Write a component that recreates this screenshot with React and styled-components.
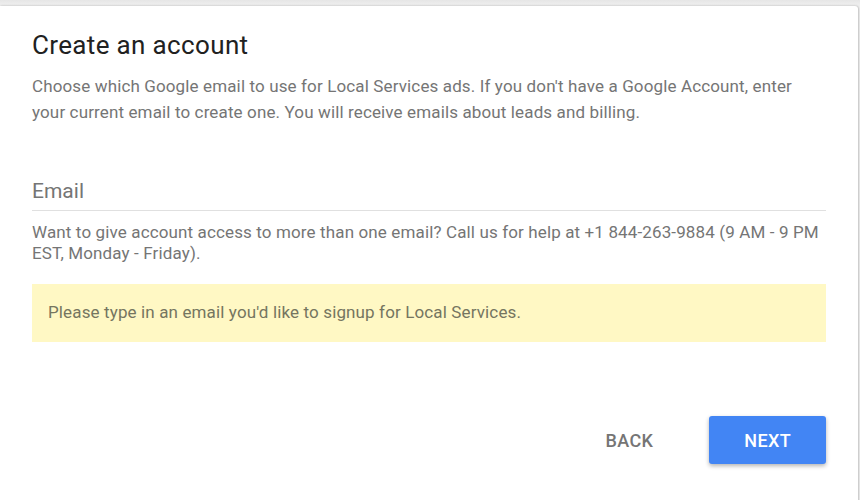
import styled, { createGlobalStyle } from 'styled-components'

const GlobalStyle = createGlobalStyle`
    html, body {
        margin: 0;
        padding: 0;
        background: #f2f2f2;
        font-family: Roboto, "Liberation Sans", Arial, sans-serif;
        overflow: hidden;
    }
`

const Page = styled.div`
    padding: 6px 2px 0 0;
    height: 494px;
    background: linear-gradient(#e6e6e6, #f0f0f0 6px);
`

const Card = styled.div`
    background: #fff;
    border-radius: 0 3px 0 0;
    box-shadow: 1px 0 2px rgba(0, 0, 0, 0.18), 0 -1px 2px rgba(0, 0, 0, 0.05);
    padding: 23px 32px 40px 32px;
    min-height: 100%;
    box-sizing: border-box;
`

const Title = styled.h1`
    margin: 0;
    font-size: 26px;
    line-height: 32px;
    font-weight: 400;
    letter-spacing: 0.35px;
    color: #212121;
`

const Intro = styled.p`
    margin: 12px 0 0;
    font-size: 17px;
    line-height: 26px;
    letter-spacing: 0.13px;
    color: #757575;
`

const EmailInput = styled.input`
    margin-top: 50px;
    display: block;
    width: 100%;
    box-sizing: border-box;
    border: none;
    border-bottom: 1px solid #e0e0e0;
    padding: 0 0 3px;
    height: 36px;
    line-height: 32px;
    font-size: 21px;
    font-family: inherit;
    color: #212121;
    outline: none;
    background: transparent;

    ::placeholder {
        color: #9e9e9e;
    }
`

const HelpText = styled.p`
    margin: 11px 0 0;
    font-size: 17px;
    line-height: 21px;
    letter-spacing: 0.13px;
    color: #757575;
`

const Notice = styled.div`
    margin-top: 20px;
    background: #fff8c4;
    padding: 16px 16px 17px;
    font-size: 17px;
    line-height: 25px;
    letter-spacing: 0.13px;
    color: #757560;
`

const Actions = styled.div`
    margin-top: 74px;
    display: flex;
    justify-content: flex-end;
    gap: 20px;
`

const Button = styled.button`
    height: 48px;
    padding: 0 ${(p) => (p.$primary ? '35px' : '36px')};
    border: none;
    border-radius: 3px;
    font-family: inherit;
    font-size: 18px;
    font-weight: 500;
    letter-spacing: 0.35px;
    text-transform: uppercase;
    cursor: pointer;
    background: ${(p) => (p.$primary ? '#4285f4' : 'transparent')};
    color: ${(p) => (p.$primary ? '#fff' : '#757575')};
    box-shadow: ${(p) => (p.$primary ? '0 2px 4px rgba(0, 0, 0, 0.3)' : 'none')};
`

export default function App() {
    return (
        <>
            <GlobalStyle />
            <Page>
                <Card>
                    <Title>Create an account</Title>
                    <Intro>
                        Choose which Google email to use for Local Services ads. If you
                        don't have a Google Account, enter your current email to create
                        one. You will receive emails about leads and billing.
                    </Intro>
                    <EmailInput type="email" placeholder="Email" />
                    <HelpText>
                        Want to give account access to more than one email? Call us for
                        help at +1 844-263-9884 (9 AM - 9 PM EST, Monday - Friday).
                    </HelpText>
                    <Notice>
                        Please type in an email you'd like to signup for Local Services.
                    </Notice>
                    <Actions>
                        <Button>Back</Button>
                        <Button $primary>Next</Button>
                    </Actions>
                </Card>
            </Page>
        </>
    )
}
